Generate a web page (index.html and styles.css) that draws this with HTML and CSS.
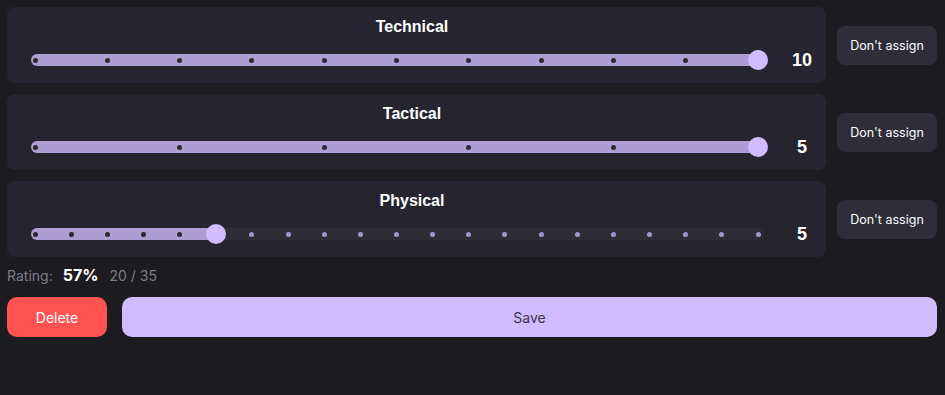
FILE: index.html
```html
<!DOCTYPE html>
<html lang="en">
<head>
    <meta charset="UTF-8">
    <meta name="viewport" content="width=device-width, initial-scale=1.0">
    <title>Player Rating</title>
    <link rel="stylesheet" href="styles.css">
</head>
<body>
    <div class="rating-list">
        <div class="skill-row">
            <div class="skill-card">
                <div class="skill-title">Technical</div>
                <div class="slider-row">
                    <div class="slider" data-max="10" data-value="10"></div>
                    <div class="skill-value">10</div>
                </div>
            </div>
            <button class="skip-btn">Don't assign</button>
        </div>

        <div class="skill-row">
            <div class="skill-card">
                <div class="skill-title">Tactical</div>
                <div class="slider-row">
                    <div class="slider" data-max="5" data-value="5"></div>
                    <div class="skill-value">5</div>
                </div>
            </div>
            <button class="skip-btn">Don't assign</button>
        </div>

        <div class="skill-row">
            <div class="skill-card">
                <div class="skill-title">Physical</div>
                <div class="slider-row">
                    <div class="slider" data-max="20" data-value="5"></div>
                    <div class="skill-value">5</div>
                </div>
            </div>
            <button class="skip-btn">Don't assign</button>
        </div>
    </div>

    <div class="summary">
        <span class="summary-label">Rating:</span>
        <span class="summary-percent">57%</span>
        <span class="summary-points">20 / 35</span>
    </div>

    <div class="actions">
        <button class="delete-btn">Delete</button>
        <button class="save-btn">Save</button>
    </div>

    <script>
        // build track, filled part, step dots and thumb for each slider
        document.querySelectorAll('.slider').forEach(function (slider) {
            const max = Number(slider.dataset.max);
            const value = Number(slider.dataset.value);
            const pct = value / max * 100;

            const fill = document.createElement('div');
            fill.className = 'slider-fill';
            fill.style.width = 'calc(' + pct + '% * (100% - 9px) / 100% + 9px)';
            slider.appendChild(fill);

            const steps = document.createElement('div');
            steps.className = 'slider-steps';
            for (let i = 0; i <= max; i++) {
                const dot = document.createElement('div');
                dot.className = i <= value ? 'dot' : 'dot dot-off';
                dot.style.left = (i / max * 100) + '%';
                steps.appendChild(dot);
            }

            const thumb = document.createElement('div');
            thumb.className = 'thumb';
            thumb.style.left = pct + '%';
            steps.appendChild(thumb);

            slider.appendChild(steps);
        });
    </script>
</body>
</html>
```

FILE: styles.css
```css
* {
    margin: 0;
    padding: 0;
    box-sizing: border-box;
}

body {
    background: #1c1b20;
    padding: 7px 8px 7px 7px;
    font-family: 'Inter', 'Liberation Sans', sans-serif;
    color: #fff;
}

.rating-list {
    display: flex;
    flex-direction: column;
    gap: 11px;
}

.skill-row {
    display: flex;
    align-items: center;
    gap: 11px;
}

.skill-card {
    flex: 1;
    height: 76px;
    background: #26252f;
    border-radius: 8px;
    padding: 11px 0 0 24px;
}

.skill-title {
    font-family: 'Liberation Sans', Arial, sans-serif;
    font-weight: bold;
    font-size: 16px;
    line-height: 18px;
    text-align: center;
    padding-right: 33px;
}

.slider-row {
    display: flex;
    align-items: center;
    height: 20px;
    margin-top: 14px;
}

.slider {
    position: relative;
    flex: 1;
    height: 12px;
    border-radius: 6px;
    background: #2e2d37;
}

.slider-fill {
    position: absolute;
    left: 0;
    top: 0;
    height: 100%;
    border-radius: 6px;
    background: #ac9dd3;
}

.slider-steps {
    position: absolute;
    top: 0;
    bottom: 0;
    left: 4px;
    right: 5px;
}

.dot {
    position: absolute;
    top: 50%;
    width: 5px;
    height: 5px;
    margin: -2.5px 0 0 -2.5px;
    border-radius: 50%;
    background: #2b2a33;
}

.dot-off {
    background: #a395cf;
}

.thumb {
    position: absolute;
    top: 50%;
    width: 20px;
    height: 20px;
    margin: -10px 0 0 -10px;
    border-radius: 50%;
    background: #d0bcff;
}

.skill-value {
    width: 48px;
    margin-left: 15px;
    text-align: center;
    font-family: 'Liberation Sans', Arial, sans-serif;
    font-weight: bold;
    font-size: 18px;
}

.skip-btn {
    width: 100px;
    height: 39px;
    border: none;
    border-radius: 8px;
    background: #2e2d38;
    color: #fff;
    font-family: 'Inter', sans-serif;
    font-size: 12.5px;
    cursor: pointer;
}

.summary {
    display: flex;
    align-items: baseline;
    margin-top: 8px;
    line-height: 20px;
}

.summary-label {
    color: #7c7c86;
    font-size: 14px;
}

.summary-percent {
    margin-left: 10px;
    font-weight: bold;
    font-size: 16px;
}

.summary-points {
    margin-left: 11px;
    color: #7c7c86;
    font-size: 14px;
}

.actions {
    display: flex;
    gap: 15px;
    margin-top: 11px;
}

.actions button {
    height: 40px;
    border: none;
    border-radius: 10px;
    font-family: 'Inter', sans-serif;
    font-size: 14px;
    cursor: pointer;
}

.delete-btn {
    width: 100px;
    background: #ff5252;
    color: #fff;
}

.save-btn {
    flex: 1;
    background: #d0bcff;
    color: #3b3646;
}
```
